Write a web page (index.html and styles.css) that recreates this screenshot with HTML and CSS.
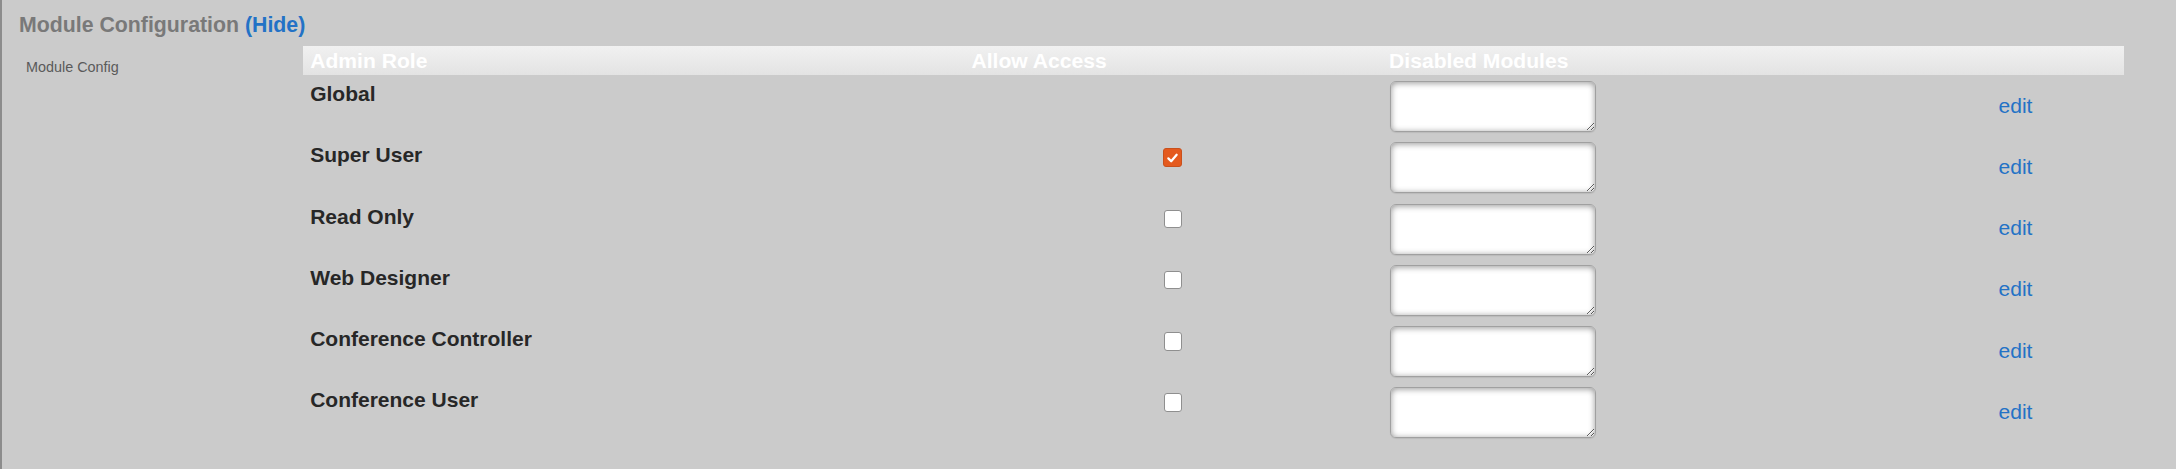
FILE: index.html
```html
<!DOCTYPE html>
<html lang="en">
<head>
<meta charset="utf-8">
<title>Module Configuration</title>
<link rel="stylesheet" href="styles.css">
</head>
<body>
<div class="panel">
  <h2 class="title">Module Configuration <a class="link" href="#">(Hide)</a></h2>
  <div class="content">
    <div class="sidebar">Module Config</div>
    <div class="table">
      <div class="thead">
        <div class="th">Admin Role</div>
        <div class="th">Allow Access</div>
        <div class="th">Disabled Modules</div>
        <div class="th"></div>
      </div>
      <div class="tbody">
        <div class="td name">Global</div>
        <div class="td access"></div>
        <div class="td mods"><textarea class="ta"></textarea></div>
        <div class="td act"><a class="link" href="#">edit</a></div>

        <div class="td name">Super User</div>
        <div class="td access"><span class="cb checked"><svg viewBox="0 0 18 18" width="18" height="18"><path d="M4.6 9.4 L7.6 12.4 L13.4 5.6" fill="none" stroke="#fff" stroke-width="2.4" stroke-linecap="round" stroke-linejoin="round"/></svg></span></div>
        <div class="td mods"><textarea class="ta"></textarea></div>
        <div class="td act"><a class="link" href="#">edit</a></div>

        <div class="td name">Read Only</div>
        <div class="td access"><span class="cb"></span></div>
        <div class="td mods"><textarea class="ta"></textarea></div>
        <div class="td act"><a class="link" href="#">edit</a></div>

        <div class="td name">Web Designer</div>
        <div class="td access"><span class="cb"></span></div>
        <div class="td mods"><textarea class="ta"></textarea></div>
        <div class="td act"><a class="link" href="#">edit</a></div>

        <div class="td name">Conference Controller</div>
        <div class="td access"><span class="cb"></span></div>
        <div class="td mods"><textarea class="ta"></textarea></div>
        <div class="td act"><a class="link" href="#">edit</a></div>

        <div class="td name">Conference User</div>
        <div class="td access"><span class="cb"></span></div>
        <div class="td mods"><textarea class="ta"></textarea></div>
        <div class="td act"><a class="link" href="#">edit</a></div>
      </div>
    </div>
  </div>
</div>
</body>
</html>
```

FILE: styles.css
```css
html, body {
  margin: 0;
  padding: 0;
  background: #cbcbcb;
  font-family: "Liberation Sans", Arial, sans-serif;
}

.panel {
  box-sizing: border-box;
  min-height: 469px;
  border-left: 2px solid #8c8c8c;
  background: #cbcbcb;
}

.title {
  margin: 0;
  padding: 13px 0 0 17px;
  font-size: 21.3px;
  line-height: 24px;
  font-weight: bold;
  color: #797979;
}

.link {
  color: #2372c6;
  text-decoration: none;
}

.content {
  display: flex;
  padding-top: 9px;
}

.sidebar {
  width: 276.7px;
  flex: none;
  padding: 13px 0 0 24px;
  font-size: 14.4px;
  line-height: 16px;
  color: #5a5a5a;
}

.table {
  width: 1821.6px;
  flex: none;
}

.thead,
.tbody {
  display: grid;
  grid-template-columns: 661.3px 417.6px 525.1px 217.6px;
}

.thead {
  height: 29px;
  background: linear-gradient(#f1f1f1, #e3e3e3);
}

.th {
  padding-left: 7.5px;
  font-size: 21.1px;
  line-height: 29px;
  font-weight: bold;
  color: #ffffff;
  white-space: nowrap;
}

.tbody {
  padding-top: 6px;
  grid-auto-rows: 61.3px;
}

.td {
  font-size: 21px;
  line-height: 23px;
}

.name {
  padding: 1px 0 0 7.5px;
  font-weight: bold;
  color: #272727;
}

.access {
  display: flex;
  justify-content: center;
  align-items: flex-start;
  padding-top: 6px;
}

.cb {
  box-sizing: border-box;
  width: 18.5px;
  height: 18.5px;
  border: 1px solid #8f8f8f;
  border-radius: 3px;
  background: #ffffff;
  display: block;
}

.cb.checked {
  width: 19px;
  height: 19px;
  background: #e45a1e;
  border-color: #c9501c;
  display: flex;
  align-items: center;
  justify-content: center;
}

.mods {
  padding-left: 8.4px;
}

.ta {
  box-sizing: border-box;
  display: block;
  width: 206px;
  height: 51px;
  margin: 0;
  border: 1px solid #a0a0a0;
  border-radius: 6px;
  background: #ffffff;
  box-shadow: inset 0 1px 6px rgba(0, 0, 0, 0.42), 0 1px 1px rgba(0, 0, 0, 0.08);
  font-family: "Liberation Sans", Arial, sans-serif;
  font-size: 14px;
  resize: both;
}

.act {
  text-align: center;
  padding-top: 12.5px;
}
```
